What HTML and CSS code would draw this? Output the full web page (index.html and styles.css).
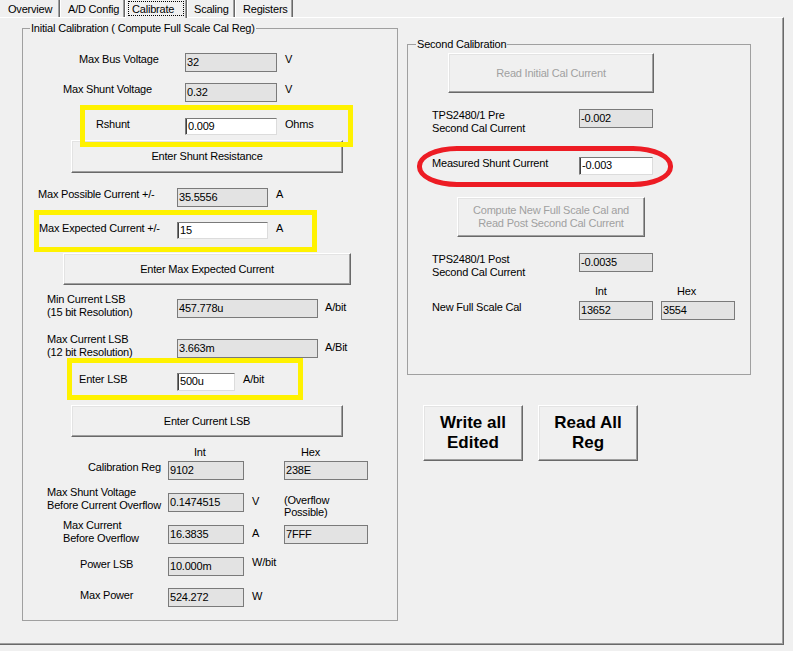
FILE: index.html
```html
<!doctype html>
<html lang="en">

<head>
  <meta charset="UTF-8">
  <meta name="viewport" content="width=device-width, initial-scale=1.0">
  <title>Calibrate</title>
  <link rel="stylesheet" href="styles.css">
</head>

<body>
  <div class="tabs">
    <div class="tab t1">Overview</div>
    <div class="tab t2">A/D Config</div>
    <div class="tab t3 active"><span class="focus">Calibrate</span></div>
    <div class="tab t4">Scaling</div>
    <div class="tab t5">Registers</div>
  </div>

  <div class="panel">
    <fieldset class="group init">
      <legend>Initial Calibration ( Compute Full Scale Cal Reg)</legend>

      <div class="row bus">
        <span class="lbl">Max Bus Voltage</span>
        <span class="ro">32</span>
        <span class="unit">V</span>
      </div>
      <div class="row vshunt">
        <span class="lbl">Max Shunt Voltage</span>
        <span class="ro">0.32</span>
        <span class="unit">V</span>
      </div>
      <div class="hl hl-rshunt">
        <span class="lbl">Rshunt</span>
        <span class="edit">0.009</span>
        <span class="unit">Ohms</span>
      </div>
      <div class="btn btn-shunt">Enter Shunt Resistance</div>

      <div class="row maxposs">
        <span class="lbl">Max Possible Current +/-</span>
        <span class="ro">35.5556</span>
        <span class="unit">A</span>
      </div>
      <div class="hl hl-maxexp">
        <span class="lbl">Max Expected Current +/-</span>
        <span class="edit">15</span>
        <span class="unit">A</span>
      </div>
      <div class="btn btn-maxexp">Enter Max Expected Current</div>

      <div class="row lsbrow minlsb">
        <span class="lbl">Min Current LSB<br>(15 bit Resolution)</span>
        <span class="ro">457.778u</span>
        <span class="unit">A/bit</span>
      </div>
      <div class="row lsbrow maxlsb">
        <span class="lbl">Max Current LSB<br>(12 bit Resolution)</span>
        <span class="ro">3.663m</span>
        <span class="unit">A/Bit</span>
      </div>
      <div class="hl hl-lsb">
        <span class="lbl">Enter LSB</span>
        <span class="edit">500u</span>
        <span class="unit">A/bit</span>
      </div>
      <div class="btn btn-lsb">Enter Current LSB</div>

      <div class="hdr hdr-reg">
        <span class="c1"></span>
        <span class="c2">Int</span>
        <span class="c3">Hex</span>
      </div>
      <div class="row reg calreg">
        <span class="lbl">Calibration Reg</span>
        <span class="ro int">9102</span>
        <span class="mid"></span>
        <span class="ro hex">238E</span>
      </div>
      <div class="row reg msv">
        <span class="lbl">Max Shunt Voltage<br>Before Current Overflow</span>
        <span class="ro int">0.1474515</span>
        <span class="mid">V</span>
        <span class="note">(Overflow<br>Possible)</span>
      </div>
      <div class="row reg mcbo">
        <span class="lbl">Max Current<br>Before Overflow</span>
        <span class="ro int">16.3835</span>
        <span class="mid">A</span>
        <span class="ro hex">7FFF</span>
      </div>
      <div class="row reg plsb">
        <span class="lbl">Power LSB</span>
        <span class="ro int">10.000m</span>
        <span class="mid">W/bit</span>
      </div>
      <div class="row reg maxp">
        <span class="lbl">Max Power</span>
        <span class="ro int">524.272</span>
        <span class="mid">W</span>
      </div>
    </fieldset>

    <div class="right">
      <fieldset class="group second">
        <legend>Second Calibration</legend>

        <div class="btn dis btn-read">Read Initial Cal Current</div>

        <div class="row side pre">
          <span class="lbl">TPS2480/1 Pre<br>Second Cal Current</span>
          <span class="ro">-0.002</span>
        </div>
        <div class="hl hl-red">
          <span class="lbl">Measured Shunt Current</span>
          <span class="edit">-0.003</span>
        </div>
        <div class="btn dis btn-compute">Compute New Full Scale Cal and<br>Read Post Second Cal Current</div>

        <div class="row side post">
          <span class="lbl">TPS2480/1 Post<br>Second Cal Current</span>
          <span class="ro">-0.0035</span>
        </div>
        <div class="hdr hdr-new">
          <span class="c1"></span>
          <span class="c2">Int</span>
          <span class="c3">Hex</span>
        </div>
        <div class="row side newcal">
          <span class="lbl">New Full Scale Cal</span>
          <span class="ro">13652</span>
          <span class="ro hex">3554</span>
        </div>
      </fieldset>

      <div class="big">
        <div class="btn">Write all<br>Edited</div>
        <div class="btn">Read All<br>Reg</div>
      </div>
    </div>
  </div>
</body>

</html>
```

FILE: styles.css
```css
* {
  box-sizing: border-box;
}

body {
  margin: 0;
  width: 793px;
  height: 651px;
  overflow: hidden;
  background: #f0f0f0;
  color: #000;
  font-family: "Liberation Sans", Arial, sans-serif;
  font-size: 11px;
  line-height: 13px;
  letter-spacing: -0.2px;
}

/* tab strip, top is cut off */
.tabs {
  display: flex;
  height: 17px;
}

.tab {
  height: 17px;
  padding-top: 3px;
  border-left: 1px solid #fff;
  border-right: 1px solid #696969;
  box-shadow: inset -1px 0 #a0a0a0;
  white-space: nowrap;
}

.t1 { width: 60px; padding-left: 8px; border-left: 0; }
.t2 { width: 65px; padding-left: 7px; }
.t3 { width: 62px; padding-left: 2px; }
.t4 { width: 48px; padding-left: 6px; }
.t5 { width: 58px; padding-left: 7px; }

.tab.active {
  position: relative;
  z-index: 1;
  height: 18px;
  padding-top: 1px;
  background: #f0f0f0;
}

.focus {
  display: inline-block;
  width: 56px;
  height: 15px;
  padding: 1px 0 0 3px;
  border: 1px dotted #000;
}

.panel {
  display: flex;
  align-items: flex-start;
  width: 784px;
  height: 628px;
  padding-left: 22px;
  border-top: 1px solid #fff;
  border-right: 1px solid #696969;
  border-bottom: 1px solid #696969;
  box-shadow: inset -1px -1px #a0a0a0;
}

/* group boxes */
.group {
  margin: 0;
  padding: 0;
  min-width: 0;
  border: 1px solid #a0a0a0;
}

.group legend {
  margin-left: 7px;
  padding: 0 1px;
  line-height: 14px;
}

.init {
  width: 376px;
  height: 600px;
  margin-top: 3px;
}

.right {
  margin-left: 9px;
  margin-top: 19px;
}

.second {
  width: 344px;
  height: 338px;
}

.second legend {
  margin-left: 8px;
}

/* controls */
.row {
  display: flex;
  align-items: flex-start;
}

.lbl {
  flex: none;
  white-space: nowrap;
}

.unit {
  margin-left: 8px;
  white-space: nowrap;
}

.ro {
  flex: none;
  height: 19px;
  padding-left: 1px;
  border: 1px solid #7a7a7a;
  background: #e3e3e3;
  line-height: 16px;
  white-space: nowrap;
}

.edit {
  flex: none;
  height: 17px;
  padding-left: 2px;
  border: 1px solid;
  border-color: #7a7a7a #dcdcdc #dcdcdc #7a7a7a;
  box-shadow: inset 1px 0 #404040;
  background: #fff;
  line-height: 15px;
  white-space: nowrap;
}

.btn {
  display: flex;
  align-items: center;
  justify-content: center;
  text-align: center;
  border: 1px solid;
  border-color: #fff #696969 #696969 #fff;
  box-shadow: inset -1px -1px #a0a0a0, inset 1px 1px #e3e3e3;
  background: #f0f0f0;
}

.btn.dis {
  color: #a0a0a0;
}

/* yellow / red markers drawn on the screenshot */
.hl {
  position: relative;
  z-index: 1;
  display: flex;
  align-items: flex-start;
  height: 42px;
  border: 5px solid #fff200;
}

.hl-red {
  height: 41px;
  margin: 11px 0 0 9px;
  width: 256px;
  padding-top: 6px;
  border-color: #ed1c24;
  border-radius: 40px / 20px;
}

.hl-red .lbl { width: 157px; padding-left: 10px; }
.hl-red .edit { width: 74px; height: 18px; }

/* left group rows */
.bus { margin-top: 18px; }
.bus .lbl { width: 162px; padding-left: 56px; }
.bus .ro { width: 92px; }

.vshunt { margin-top: 11px; }
.vshunt .lbl { width: 162px; padding-left: 40px; }
.vshunt .ro { width: 92px; }

.hl-rshunt { margin: 3px 0 0 57px; width: 273px; padding-top: 8px; }
.hl-rshunt .lbl { width: 100px; padding-left: 11px; }
.hl-rshunt .edit { width: 92px; }

.btn-shunt { margin: -7px 0 0 48px; width: 272px; height: 33px; }

.maxposs { margin-top: 15px; }
.maxposs .lbl { width: 154px; padding-left: 15px; }
.maxposs .ro { width: 91px; }

.hl-maxexp { margin: 3px 0 0 11px; width: 283px; padding-top: 7px; }
.hl-maxexp .lbl { width: 138px; }
.hl-maxexp .edit { width: 91px; }

.btn-maxexp { margin: 1px 0 0 40px; width: 288px; height: 32px; }

.minlsb { margin-top: 14px; }
.maxlsb { margin-top: 20px; }
.lsbrow .lbl { width: 154px; padding-left: 24px; margin-top: -6px; }
.lsbrow .ro { width: 141px; }
.lsbrow .unit { margin: 2px 0 0 7px; }

.hl-lsb { margin: -1px 0 0 44px; width: 236px; padding-top: 10px; }
.hl-lsb .lbl { width: 105px; padding-left: 7px; }
.hl-lsb .edit { width: 58px; height: 18px; }

.btn-lsb { margin: 5px 0 0 48px; width: 272px; height: 32px; }

.hdr {
  display: flex;
}

.hdr-reg { margin-top: 9px; }
.hdr-reg .c1 { width: 145px; }
.hdr-reg .c2 { width: 116px; padding-left: 26px; }
.hdr-reg .c3 { padding-left: 17px; }

.reg .lbl { width: 145px; }
.reg .int { width: 76px; }
.reg .mid { width: 40px; padding-left: 8px; white-space: nowrap; }
.reg .hex { width: 84px; }

.calreg { margin-top: 2px; }
.calreg .lbl { padding-left: 65px; }

.msv { margin-top: 13px; }
.msv .lbl { padding-left: 24px; margin-top: -7px; }
.msv .mid { margin-top: 2px; }
.msv .note { margin-top: 1px; line-height: 12px; }

.mcbo { margin-top: 7px; }
.mcbo .lbl { padding-left: 40px; margin-top: -6px; }
.mcbo .mid { margin-top: 2px; }

.plsb { margin-top: 12px; }
.plsb .lbl { padding-left: 57px; margin-top: 1px; }
.plsb .mid { margin-top: -1px; }

.maxp { margin-top: 12px; }
.maxp .lbl { padding-left: 57px; margin-top: 1px; }
.maxp .mid { margin-top: 2px; }

/* right group rows */
.btn-read { margin: 2px 0 0 40px; width: 206px; height: 40px; }

.side .lbl { width: 171px; padding-left: 24px; }
.side .ro { width: 74px; }

.pre { margin-top: 16px; }

.btn-compute { margin: 10px 0 0 49px; width: 188px; height: 40px; }

.post { margin-top: 16px; }

.hdr-new { margin-top: 6px; }
.hdr-new .c1 { width: 171px; }
.hdr-new .c2 { width: 82px; padding-left: 16px; }
.hdr-new .c3 { padding-left: 16px; }

.newcal { margin-top: 3px; }
.newcal .hex { margin-left: 8px; }

.big {
  display: flex;
  gap: 15px;
  margin: 30px 0 0 16px;
}

.big .btn {
  width: 100px;
  height: 56px;
  font-size: 17px;
  font-weight: bold;
  line-height: 20px;
  letter-spacing: 0;
}
```
